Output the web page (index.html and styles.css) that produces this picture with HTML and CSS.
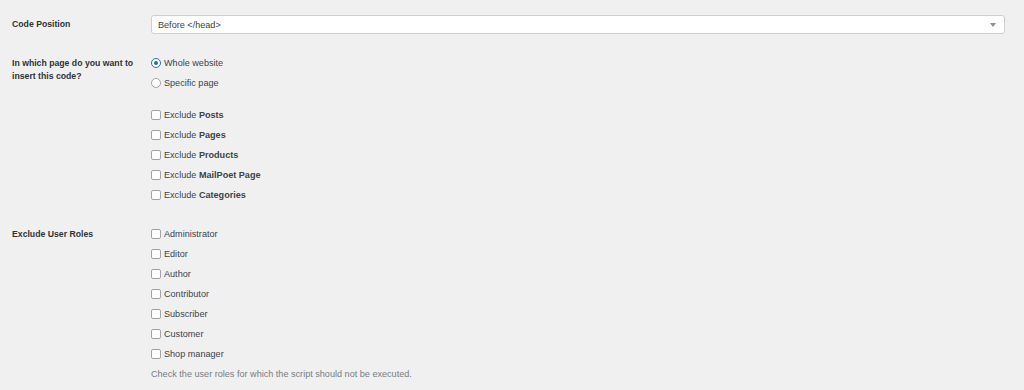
FILE: index.html
```html
<!DOCTYPE html>
<html lang="en">
<head>
	<meta charset="UTF-8">
	<title>Code settings</title>
	<link rel="stylesheet" href="styles.css">
</head>
<body>
	<div class="form">
		<div class="row row-first">
			<div class="th th-select">Code Position</div>
			<div class="td">
				<div class="select">
					<span>Before &lt;/head&gt;</span>
					<span class="arrow"></span>
				</div>
			</div>
		</div>

		<div class="row">
			<div class="th">In which page do you want to insert this code?</div>
			<div class="td">
				<div class="group">
					<label class="opt"><span class="radio on"></span>Whole website</label>
					<label class="opt"><span class="radio"></span>Specific page</label>
				</div>
				<div class="group group-exclude">
					<label class="opt"><span class="check"></span>Exclude <b>Posts</b></label>
					<label class="opt"><span class="check"></span>Exclude <b>Pages</b></label>
					<label class="opt"><span class="check"></span>Exclude <b>Products</b></label>
					<label class="opt"><span class="check"></span>Exclude <b>MailPoet Page</b></label>
					<label class="opt"><span class="check"></span>Exclude <b>Categories</b></label>
				</div>
			</div>
		</div>

		<div class="row">
			<div class="th">Exclude User Roles</div>
			<div class="td">
				<div class="group">
					<label class="opt"><span class="check"></span>Administrator</label>
					<label class="opt"><span class="check"></span>Editor</label>
					<label class="opt"><span class="check"></span>Author</label>
					<label class="opt"><span class="check"></span>Contributor</label>
					<label class="opt"><span class="check"></span>Subscriber</label>
					<label class="opt"><span class="check"></span>Customer</label>
					<label class="opt"><span class="check"></span>Shop manager</label>
				</div>
				<p class="help">Check the user roles for which the script should not be executed.</p>
			</div>
		</div>
	</div>
</body>
</html>
```

FILE: styles.css
```css
*{
	margin: 0;
	padding: 0;
	box-sizing: border-box;
}
html,body{
	background-color: #f0f0f1;
}
body{
	font-family: "Liberation Sans", Arial, sans-serif;
	font-size: 9.1px;
	color: #3c434a;
}
.form{
	padding: 15px 19px 0 12px;
}
.row{
	display: grid;
	grid-template-columns: 139px 1fr;
	margin-top: 19px;
}
.row-first{
	margin-top: 0;
}
.th{
	font-size: 8.7px;
	font-weight: 700;
	color: #2c3338;
	line-height: 13px;
	padding-top: 4px;
	padding-right: 8px;
}
.th-select{
	padding-top: 3px;
}
.select{
	height: 19px;
	background-color: #fff;
	border: 1px solid #cfcfd2;
	border-radius: 3px;
	display: flex;
	align-items: center;
	justify-content: space-between;
	padding: 0 8px 0 6px;
	color: #3c434a;
}
.arrow{
	width: 0;
	height: 0;
	border-left: 3px solid transparent;
	border-right: 3px solid transparent;
	border-top: 4px solid #8c8f94;
}
.group{
	display: flex;
	flex-direction: column;
}
.group-exclude{
	margin-top: 12px;
}
.opt{
	display: flex;
	align-items: center;
	height: 20px;
	line-height: 20px;
	white-space: pre;
}
.opt b{
	font-weight: 700;
	color: #3c434a;
}
.radio,.check{
	width: 10px;
	height: 10px;
	border: 1px solid #a0a3a8;
	background-color: #fff;
	margin-right: 3px;
	flex-shrink: 0;
}
.radio{
	border-radius: 50%;
	display: flex;
	align-items: center;
	justify-content: center;
}
.radio.on{
	border-color: #2271b1;
}
.radio.on::after{
	content: "";
	width: 4px;
	height: 4px;
	border-radius: 50%;
	background-color: #2271b1;
}
.check{
	border-radius: 2px;
}
.help{
	line-height: 20px;
	color: #787c82;
}
```
